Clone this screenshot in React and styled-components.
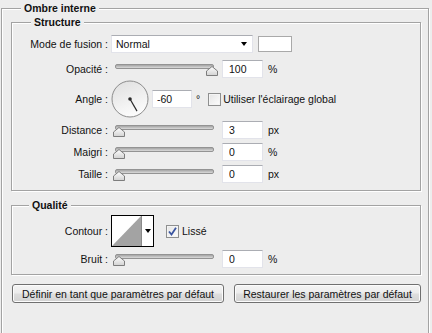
import { createGlobalStyle } from 'styled-components';
import styled from 'styled-components';

const GlobalStyle = createGlobalStyle`
  html, body {
    margin: 0;
    padding: 0;
    background: #ededed;
    overflow: hidden;
  }
  body {
    font-family: 'Liberation Sans', Arial, sans-serif;
    font-size: 10.5px;
    color: #111;
  }
`;

const Page = styled.div`
  width: 432px;
  height: 333px;
  padding: 1px 0 0 1px;
  box-sizing: border-box;
  overflow: hidden;
`;

const Group = styled.fieldset`
  margin: ${({ $mt }) => $mt || 0}px 0 0 0;
  padding: ${({ $pad }) => $pad};
  width: ${({ $w }) => $w}px;
  min-height: ${({ $minH }) => ($minH ? `${$minH}px` : 'auto')};
  box-sizing: border-box;
  border: 1px solid #a3a3a3;
  box-shadow: inset 1px 1px 0 #fff, 1px 1px 0 #fff;
  min-inline-size: 0;
`;

const Legend = styled.legend`
  margin-left: ${({ $ml }) => $ml}px;
  padding: 0 3px;
  line-height: 14px;
  font-weight: bold;
  font-size: 10.5px;
  color: #111;
  background: #ededed;
`;

const Rows = styled.div`
  display: flex;
  flex-direction: column;
`;

const Row = styled.div`
  display: flex;
  align-items: center;
  height: ${({ $h }) => $h}px;
  margin-top: ${({ $mt }) => $mt || 0}px;
`;

const Label = styled.span`
  width: 96px;
  margin-right: 3px;
  text-align: right;
  white-space: nowrap;
`;

const Select = styled.div`
  display: flex;
  align-items: center;
  justify-content: space-between;
  width: 142px;
  height: 18px;
  box-sizing: border-box;
  padding: 0 5px 0 4px;
  background: #fff;
  border: 1px solid #e2e3ea;
  border-top-color: #abadb3;
`;

const Arrow = styled.span`
  width: 0;
  height: 0;
  border-left: 3.5px solid transparent;
  border-right: 3.5px solid transparent;
  border-top: 4px solid #000;
`;

const Swatch = styled.div`
  width: 34px;
  height: 16px;
  margin-left: 5px;
  box-sizing: border-box;
  background: #fff;
  border: 1px solid #a9a9a9;
`;

const SliderWrap = styled.div`
  position: relative;
  width: 107px;
  height: 18px;
  flex-shrink: 0;
`;

const Track = styled.div`
  position: absolute;
  left: 4px;
  right: 4px;
  top: 4px;
  height: 3px;
  border-radius: 2px;
  border: 1px solid #939393;
  background: linear-gradient(#a4a4a4, #dadada);
`;

const Thumb = styled.svg`
  position: absolute;
  top: 6px;
`;

const TextBox = styled.input`
  width: ${({ $w }) => $w || 41}px;
  height: 18px;
  margin-left: ${({ $ml }) => $ml}px;
  box-sizing: border-box;
  padding: 0 0 0 ${({ $pl }) => $pl || 6}px;
  border: 1px solid #e2e3ea;
  border-top-color: #abadb3;
  background: #fff;
  font-family: 'Liberation Sans', Arial, sans-serif;
  font-size: 10.5px;
  color: #111;
  outline: none;
`;

const Unit = styled.span`
  margin-left: ${({ $ml }) => $ml || 5}px;
`;

const CheckBox = styled.span`
  display: inline-flex;
  align-items: center;
  justify-content: center;
  width: 13px;
  height: 13px;
  margin-left: ${({ $ml }) => $ml}px;
  margin-right: ${({ $mr }) => $mr || 3}px;
  box-sizing: border-box;
  border: 1px solid #8e8f8f;
  background: linear-gradient(135deg, #e4e4e4, #fdfdfd);
  box-shadow: inset 0 0 0 1px #f4f4f4;
`;

const ContourBox = styled.div`
  display: flex;
  width: 43px;
  height: 32px;
  box-sizing: border-box;
  border: 1px solid #000;
  background: #fff;
`;

const ContourDrop = styled.div`
  display: flex;
  align-items: center;
  justify-content: center;
  flex: 1;
  border-left: 1px solid #8a8a8a;
  background: #fff;
`;

const ButtonBar = styled.div`
  display: flex;
  gap: 10px;
  margin: 9px 0 0 1px;
`;

const Button = styled.button`
  width: ${({ $w }) => $w}px;
  height: 19px;
  padding: 0;
  border: 1px solid #707070;
  border-radius: 3px;
  background: linear-gradient(#f4f4f4 0%, #ececec 48%, #dedede 52%, #d2d2d2 100%);
  box-shadow: inset 0 0 0 1px #fcfcfc;
  font-family: 'Liberation Sans', Arial, sans-serif;
  font-size: 10.5px;
  color: #111;
`;

function Slider({ value }) {
  return (
    <SliderWrap>
      <Track />
      <Thumb width="12" height="10" viewBox="0 0 12 10" style={{ left: 1.5 + value * 0.935 }}>
        <defs>
          <linearGradient id={`th${value}`} x1="0" y1="0" x2="0" y2="1">
            <stop offset="0" stopColor="#ffffff" />
            <stop offset="1" stopColor="#d2d2d2" />
          </linearGradient>
        </defs>
        <path d="M6 0.5 L11.5 5 L11.5 9.5 L0.5 9.5 L0.5 5 Z" fill={`url(#th${value})`} stroke="#7d7d7d" />
      </Thumb>
    </SliderWrap>
  );
}

function Check({ checked, ml, mr }) {
  return (
    <CheckBox $ml={ml} $mr={mr}>
      {checked && (
        <svg width="9" height="9" viewBox="0 0 9 9">
          <path d="M1 4.5 L3.5 7.5 L8 0.8" fill="none" stroke="#3a55a0" strokeWidth="1.8" />
        </svg>
      )}
    </CheckBox>
  );
}

function Dial({ angle }) {
  // photoshop angles run counter-clockwise, svg y points down
  const rad = (-angle * Math.PI) / 180;
  const x2 = 19 + 14 * Math.cos(rad);
  const y2 = 19 + 14 * Math.sin(rad);
  return (
    <svg width="38" height="38" viewBox="0 0 38 38">
      <defs>
        <linearGradient id="dialFill" x1="0" y1="0" x2="0.4" y2="1">
          <stop offset="0" stopColor="#dedede" />
          <stop offset="1" stopColor="#fbfbfb" />
        </linearGradient>
      </defs>
      <circle cx="19" cy="19" r="18" fill="url(#dialFill)" stroke="#8c8c8c" />
      <line x1="19" y1="19" x2={x2} y2={y2} stroke="#2a2a2a" strokeWidth="1.2" />
      <circle cx="19" cy="19" r="1.8" fill="#2a2a2a" />
    </svg>
  );
}

function ContourThumb() {
  return (
    <ContourBox>
      <svg width="29" height="30" viewBox="0 0 29 30">
        <path d="M0 30 L29 0 L29 30 Z" fill="#a3a3a3" />
      </svg>
      <ContourDrop>
        <Arrow />
      </ContourDrop>
    </ContourBox>
  );
}

export default function App() {
  return (
    <Page>
      <GlobalStyle />
      <Group $w={428} $pad="0 7px 0 9px" $minH={340}>
        <Legend $ml={10}>Ombre interne</Legend>

        <Group $w={410} $pad="6px 0 7px 0">
          <Legend $ml={19}>Structure</Legend>
          <Rows>
            <Row $h={18}>
              <Label>Mode de fusion :</Label>
              <Select>
                <span>Normal</span>
                <Arrow />
              </Select>
              <Swatch />
            </Row>
            <Row $h={18} $mt={7}>
              <Label>Opacité :</Label>
              <Slider value={100} />
              <TextBox $ml={4} readOnly value="100" />
              <Unit>%</Unit>
            </Row>
            <Row $h={38} $mt={2}>
              <Label>Angle :</Label>
              <Dial angle={-60} />
              <TextBox $ml={3} $pl={4} $w={40} readOnly value="-60" />
              <Unit $ml={4}>°</Unit>
              <Check ml={8} mr={2} />
              <span>Utiliser l'éclairage global</span>
            </Row>
            <Row $h={18} $mt={3}>
              <Label>Distance :</Label>
              <Slider value={0} />
              <TextBox $ml={4} readOnly value="3" />
              <Unit>px</Unit>
            </Row>
            <Row $h={18} $mt={4}>
              <Label>Maigri :</Label>
              <Slider value={0} />
              <TextBox $ml={4} readOnly value="0" />
              <Unit>%</Unit>
            </Row>
            <Row $h={18} $mt={4}>
              <Label>Taille :</Label>
              <Slider value={0} />
              <TextBox $ml={4} readOnly value="0" />
              <Unit>px</Unit>
            </Row>
          </Rows>
        </Group>

        <Group $w={410} $mt={7} $pad="3px 0 6px 0">
          <Legend $ml={17}>Qualité</Legend>
          <Rows>
            <Row $h={32}>
              <Label>Contour :</Label>
              <ContourThumb />
              <Check checked ml={12} mr={3} />
              <span>Lissé</span>
            </Row>
            <Row $h={18} $mt={3}>
              <Label>Bruit :</Label>
              <Slider value={0} />
              <TextBox $ml={4} readOnly value="0" />
              <Unit>%</Unit>
            </Row>
          </Rows>
        </Group>

        <ButtonBar>
          <Button $w={212}>Définir en tant que paramètres par défaut</Button>
          <Button $w={187}>Restaurer les paramètres par défaut</Button>
        </ButtonBar>
      </Group>
    </Page>
  );
}
